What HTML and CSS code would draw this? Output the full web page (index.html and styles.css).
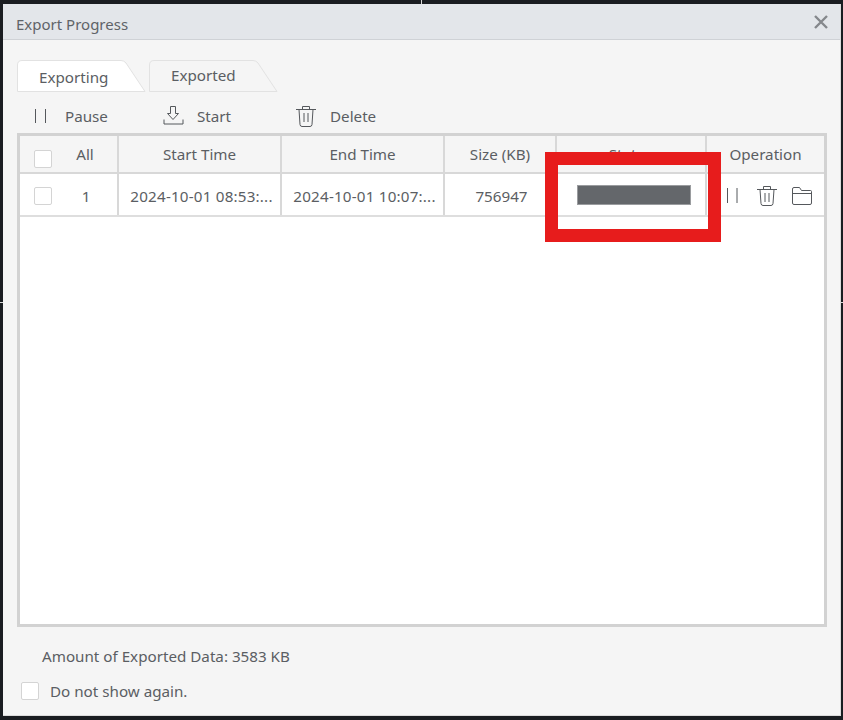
FILE: index.html
```html
<!DOCTYPE html>
<html lang="en">
<head>
<meta charset="utf-8">
<title>Export Progress</title>
<link rel="stylesheet" href="styles.css">
</head>
<body>
<span class="tick tick-top"></span><span class="tick tick-left"></span><span class="tick tick-right"></span>
<div class="dialog">
  <header class="titlebar">
    <span class="title">Export Progress</span>
    <svg class="close" width="16" height="16" viewBox="0 0 16 16"><path d="M2 2l12 12M14 2L2 14" stroke="#85888c" stroke-width="2.4" fill="none"/></svg>
  </header>
  <div class="content">
    <div class="tabs">
      <div class="tab tab-active">
        <svg class="tab-shape" width="129" height="32" viewBox="0 0 129 32"><path d="M.5 31.500V5Q.5 .5 5 .5H104Q107 .5 109 3L128 31.500Z" fill="#fff" stroke="#e2e2e2"/></svg>
        <span class="tab-label">Exporting</span>
      </div>
      <div class="tab tab-idle">
        <svg class="tab-shape" width="129" height="32" viewBox="0 0 129 32"><path d="M.5 31.500V5Q.5 .5 5 .5H104Q107 .5 109 3L128 31.500Z" fill="#f5f5f5" stroke="#e2e2e2"/></svg>
        <span class="tab-label">Exported</span>
      </div>
    </div>
    <div class="toolbar">
      <div class="tool tool-pause">
        <svg width="13" height="14" viewBox="0 0 13 14"><path d="M1.5 0v14M11.5 0v14" stroke="#55585c" fill="none"/></svg>
        <span>Pause</span>
      </div>
      <div class="tool tool-start">
        <svg width="21" height="21" viewBox="0 0 21 21"><path d="M7.5 1.5h5v7h3L10 14.500 4.500 8.500h3zM1 14.500v4.500h19v-4.500" stroke="#55585c" fill="none"/></svg>
        <span>Start</span>
      </div>
      <div class="tool tool-delete">
        <svg width="20" height="22" viewBox="0 0 20 22"><path d="M0 4.500h20M6.500 4.500V1.500h7v3M3 4.500l1 15q.2 2 2 2h8q1.800 0 2-2l1-15M8 8v9M12 8v9" stroke="#55585c" fill="none"/></svg>
        <span>Delete</span>
      </div>
    </div>
    <div class="grid">
      <div class="row head">
        <div class="cell col-all"><span class="box box-head"></span><span class="all-label">All</span></div>
        <div class="cell col-start">Start Time</div>
        <div class="cell col-end">End Time</div>
        <div class="cell col-size">Size (KB)</div>
        <div class="cell col-status">Status</div>
        <div class="cell col-op">Operation</div>
      </div>
      <div class="row body-row">
        <div class="cell col-all"><span class="box"></span><span class="all-label">1</span></div>
        <div class="cell col-start date">2024-10-01 08:53:...</div>
        <div class="cell col-end date">2024-10-01 10:07:...</div>
        <div class="cell col-size size-value">756947</div>
        <div class="cell col-status"><span class="redaction"></span></div>
        <div class="cell col-op ops">
          <svg width="12" height="15" viewBox="0 0 12 15"><path d="M1.500 0v15M11 0v15" stroke="#55585c" fill="none"/></svg>
          <svg width="20" height="21" viewBox="0 0 20 21"><path d="M0 4.500h20M6.500 4.500V1.500h7v3M3 4.500l1 14q.2 2 2 2h8q1.800 0 2-2l1-14M8 8v9M12 8v9" stroke="#55585c" fill="none"/></svg>
          <svg width="20" height="18" viewBox="0 0 20 18"><path d="M.5 16V2q0-1.500 1.500-1.500h5.500l2 3h9q1 0 1 1V16q0 1.500-1.500 1.500H2Q.5 17.500.5 16zM.5 6.500h19" stroke="#55585c" fill="none"/></svg>
        </div>
      </div>
    </div>
    <div class="amount">Amount of Exported Data: 3583 KB</div>
    <label class="dont-show"><span class="box"></span><span>Do not show again.</span></label>
  </div>
</div>
<div class="red-frame"></div>
</body>
</html>
```
FILE: styles.css
```css
* { box-sizing: border-box; }
html, body { margin: 0; height: 720px; }
body {
  position: relative;
  width: 843px;
  overflow: hidden;
  background: #1a1d21;
  padding: 4px 2px 4px 3px;
  font-family: "Noto Sans", "Open Sans", sans-serif;
  font-size: 15.2px;
  color: #5b5e63;
}
.tick { position: absolute; background: #d8d8d8; }
.tick-top { left: 421px; top: 0; width: 1px; height: 4px; }
.tick-left { left: 0; top: 302px; width: 3px; height: 1px; }
.tick-right { left: 841px; top: 302px; width: 2px; height: 1px; }
.dialog {
  height: 712px;
  background: #f5f5f5;
  border-right: 1px solid #dcdcdc;
  border-bottom: 1px solid #dcdcdc;
  display: flex;
  flex-direction: column;
}
.titlebar {
  height: 36px;
  flex: none;
  background: #e3e6ea;
  border-bottom: 1px solid #cfd2d6;
  display: flex;
  align-items: center;
  justify-content: space-between;
  padding: 0 11px 0 13px;
}
.title { color: #5f6368; font-size: 15px; padding-top: 4px; }
.close { display: block; }
.content { flex: 1; padding: 20px 14px 0; display: flex; flex-direction: column; }
.tabs { display: flex; height: 32px; gap: 3px; flex: none; }
.tab {
  position: relative;
  width: 129px;
  height: 32px;
}
.tab-shape { position: absolute; left: 0; top: 0; }
.tab-label { position: relative; display: block; }
.tab-active .tab-label { padding: 7px 0 0 22px; }
.tab-idle .tab-label { padding: 5px 0 0 22px; }
.toolbar { display: flex; align-items: center; height: 41px; flex: none; padding-top: 6px; }
.tool { display: flex; align-items: center; }
.tool-pause { margin-left: 17px; width: 129px; gap: 18px; }
.tool-start { width: 133px; gap: 13px; }
.tool-delete { gap: 14px; }
.grid {
  width: 810px;
  height: 494px;
  flex: none;
  background: #fff;
  border: 3px solid #d2d2d2;
}
.row { display: flex; }
.head { height: 38px; background: #f5f5f5; border-bottom: 2px solid #d8d8d8; }
.body-row { height: 43px; border-bottom: 2px solid #dedede; }
.body-row .cell { padding-top: 2px; }
.cell {
  display: flex;
  align-items: center;
  justify-content: center;
  border-right: 2px solid #d8d8d8;
  white-space: nowrap;
  flex: none;
}
.col-all { width: 99px; justify-content: flex-start; padding-left: 14px; }
.col-start, .col-end { width: 163px; }
.col-size { width: 112px; }
.col-status { width: 150px; }
.col-op { width: 117px; border-right: 0; }
.body-row .date { letter-spacing: .2px; padding-left: 4px; }
.body-row .size-value { padding-left: 3px; }
.all-label { width: 30px; text-align: center; margin-left: 18px; }
.body-row .all-label { margin-left: 19px; }
.box {
  display: block;
  flex: none;
  width: 18px;
  height: 18px;
  background: #fff;
  border: 1px solid #d4d4d4;
  border-radius: 2px;
}
.box-head { margin-top: 9px; }
.redaction { display: block; width: 114px; height: 20px; margin: -2px 0 0 6px; background: #64676b; border: 1px solid #9a9c9f; }
.ops { justify-content: flex-start; padding-left: 19px; gap: 0; }
.ops svg { display: block; flex: none; }
.ops svg:nth-child(2) { margin-left: 19px; }
.ops svg:nth-child(3) { margin-left: 15px; }
.amount { margin: 18px 0 0 25px; height: 22px; line-height: 22px; }
.dont-show { display: flex; align-items: center; gap: 11px; margin: 14px 0 0 4px; }
.red-frame {
  position: absolute;
  left: 545px;
  top: 152px;
  width: 176px;
  height: 90px;
  border: 13px solid #e71c1c;
}
```
